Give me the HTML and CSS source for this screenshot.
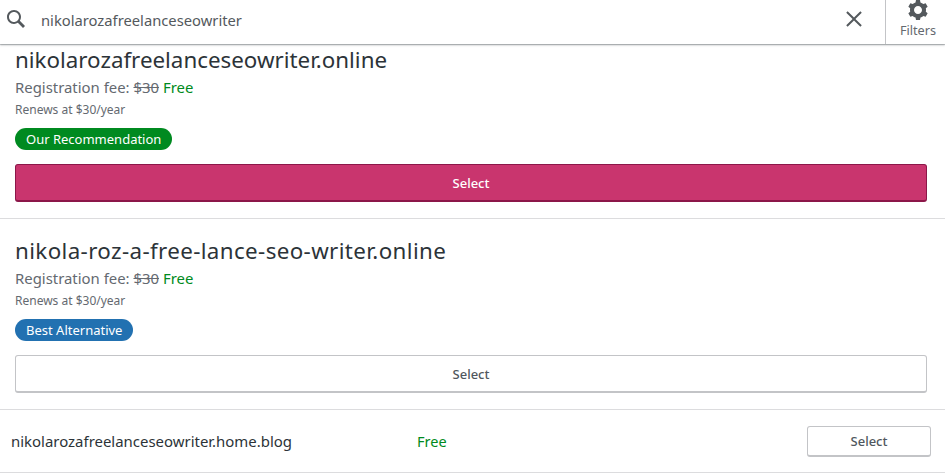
FILE: index.html
```html
<!DOCTYPE html>
<html lang="en">
<head>
<meta charset="utf-8">
<title>Domain search</title>
<link rel="stylesheet" href="styles.css">
</head>
<body>
<header class="search">
  <svg class="search-icon" width="24" height="24" viewBox="0 0 24 24"><path d="M21 19l-5.154-5.154C16.574 12.742 17 11.42 17 10c0-3.866-3.134-7-7-7s-7 3.134-7 7 3.134 7 7 7c1.42 0 2.742-.426 3.846-1.154L19 21l2-2zM5 10c0-2.757 2.243-5 5-5s5 2.243 5 5-2.243 5-5 5-5-2.243-5-5z"/></svg>
  <div class="query">nikolarozafreelanceseowriter</div>
  <svg class="clear" width="24" height="24" viewBox="0 0 24 24"><path d="M18.36 19.78L12 13.41l-6.36 6.37-1.42-1.42L10.59 12 4.22 5.64l1.42-1.42L12 10.59l6.36-6.36 1.41 1.41L13.41 12l6.36 6.36z"/></svg>
  <div class="filters">
    <svg class="gear" width="24" height="24" viewBox="0 0 24 24"><path d="M20 12c0-.568-.061-1.122-.174-1.656l1.834-1.612-2-3.464-2.322.786c-.819-.736-1.787-1.308-2.859-1.657L14 2h-4l-.479 2.396c-1.072.349-2.04.921-2.859 1.657L4.34 5.268l-2 3.464 1.834 1.612C4.061 10.878 4 11.432 4 12s.061 1.122.174 1.656L2.34 15.268l2 3.464 2.322-.786c.819.736 1.787 1.308 2.859 1.657L10 22h4l.479-2.396c1.072-.349 2.04-.921 2.859-1.657l2.322.786 2-3.464-1.834-1.612C19.939 13.122 20 12.568 20 12zM12 16c-2.209 0-4-1.791-4-4s1.791-4 4-4 4 1.791 4 4-1.791 4-4 4z"/></svg>
    <span class="filters-label">Filters</span>
  </div>
</header>
<main>
  <section class="card">
    <h2 class="domain">nikolarozafreelanceseowriter.online</h2>
    <p class="fee">Registration fee: <s>$30</s> <span class="free">Free</span></p>
    <p class="renew">Renews at $30/year</p>
    <span class="badge badge-green">Our Recommendation</span>
    <button class="btn btn-primary">Select</button>
  </section>
  <section class="card">
    <h2 class="domain domain-hyphenated">nikola-roz-a-free-lance-seo-writer.online</h2>
    <p class="fee">Registration fee: <s>$30</s> <span class="free">Free</span></p>
    <p class="renew">Renews at $30/year</p>
    <span class="badge badge-blue">Best Alternative</span>
    <button class="btn">Select</button>
  </section>
  <section class="row">
    <span class="row-name">nikolarozafreelanceseowriter.home.blog</span>
    <span class="row-price">Free</span>
    <button class="btn btn-small">Select</button>
  </section>
</main>
</body>
</html>
```
FILE: styles.css
```css
html, body {
  margin: 0;
  padding: 0;
  background: #fff;
  overflow: hidden;
}
body {
  font-family: "Noto Sans", sans-serif;
  color: #2e4453;
  height: 476px;
}
.search {
  position: relative;
  z-index: 1;
  display: flex;
  align-items: flex-start;
  height: 44px;
  box-sizing: border-box;
  background: #fff;
  box-shadow: 0 0 0 1px rgba(87, 94, 100, .25), 0 1px 2px rgba(87, 94, 100, .5);
}
.search-icon {
  margin: 7px 0 0 4px;
  fill: #54595d;
  flex: none;
}
.query {
  flex: 1;
  margin: 9px 0 0 13px;
  font-size: 14.75px;
  line-height: 22px;
  color: #54595d;
}
.clear {
  fill: #54595d;
  margin: 7px 19px 0 0;
  flex: none;
}
.filters {
  width: 60px;
  height: 44px;
  box-sizing: border-box;
  border-left: 1px solid #c3c4c7;
  padding-left: 5px;
  display: flex;
  flex-direction: column;
  align-items: center;
  justify-content: flex-end;
  padding-bottom: 5px;
  overflow: hidden;
}
.gear {
  fill: #54595d;
  flex: none;
  margin-top: -3px;
}
.filters-label {
  font-size: 12.7px;
  line-height: 17px;
  color: #646970;
}
.card {
  padding: 0 18px 16px 15px;
  border-bottom: 1px solid #dcdcde;
  display: flex;
  flex-direction: column;
  align-items: flex-start;
}
.card + .card {
  padding-top: 16px;
}
.domain {
  margin: 0;
  font-weight: 400;
  font-size: 22.35px;
  line-height: 32px;
  color: #2c3338;
}
.domain-hyphenated {
  letter-spacing: .38px;
}
.fee {
  margin: 0;
  font-size: 14.9px;
  line-height: 22px;
  color: #646970;
}
.fee s {
  color: #646970;
}
.free {
  color: #008a20;
}
.renew {
  margin: 2px 0 0;
  font-size: 12px;
  line-height: 20px;
  color: #646970;
}
.badge {
  margin-top: 8px;
  height: 22px;
  line-height: 22px;
  padding: 0 11px;
  border-radius: 11px;
  font-size: 13px;
  color: #fff;
}
.badge-green {
  background: #008a20;
}
.badge-blue {
  background: #2271b1;
}
.btn {
  font-family: inherit;
  font-size: 13px;
  font-weight: 500;
  color: #50575e;
  background: #fff;
  border: 1px solid #c3c4c7;
  border-bottom-width: 2px;
  border-radius: 3px;
  padding: 0;
}
.card .btn {
  width: 100%;
  height: 38px;
  margin-top: 14px;
}
.btn-primary {
  background: #c9356e;
  border-color: #8c1749;
  color: #fff;
}
.row {
  display: flex;
  align-items: center;
  height: 63px;
  box-sizing: border-box;
  padding: 0 14px 0 11px;
  border-bottom: 1px solid #dcdcde;
}
.row-name {
  width: 406px;
  font-size: 14.95px;
  color: #2c3338;
}
.row-price {
  flex: 1;
  font-size: 14.5px;
  color: #008a20;
}
.btn-small {
  width: 124px;
  height: 31px;
}
```
